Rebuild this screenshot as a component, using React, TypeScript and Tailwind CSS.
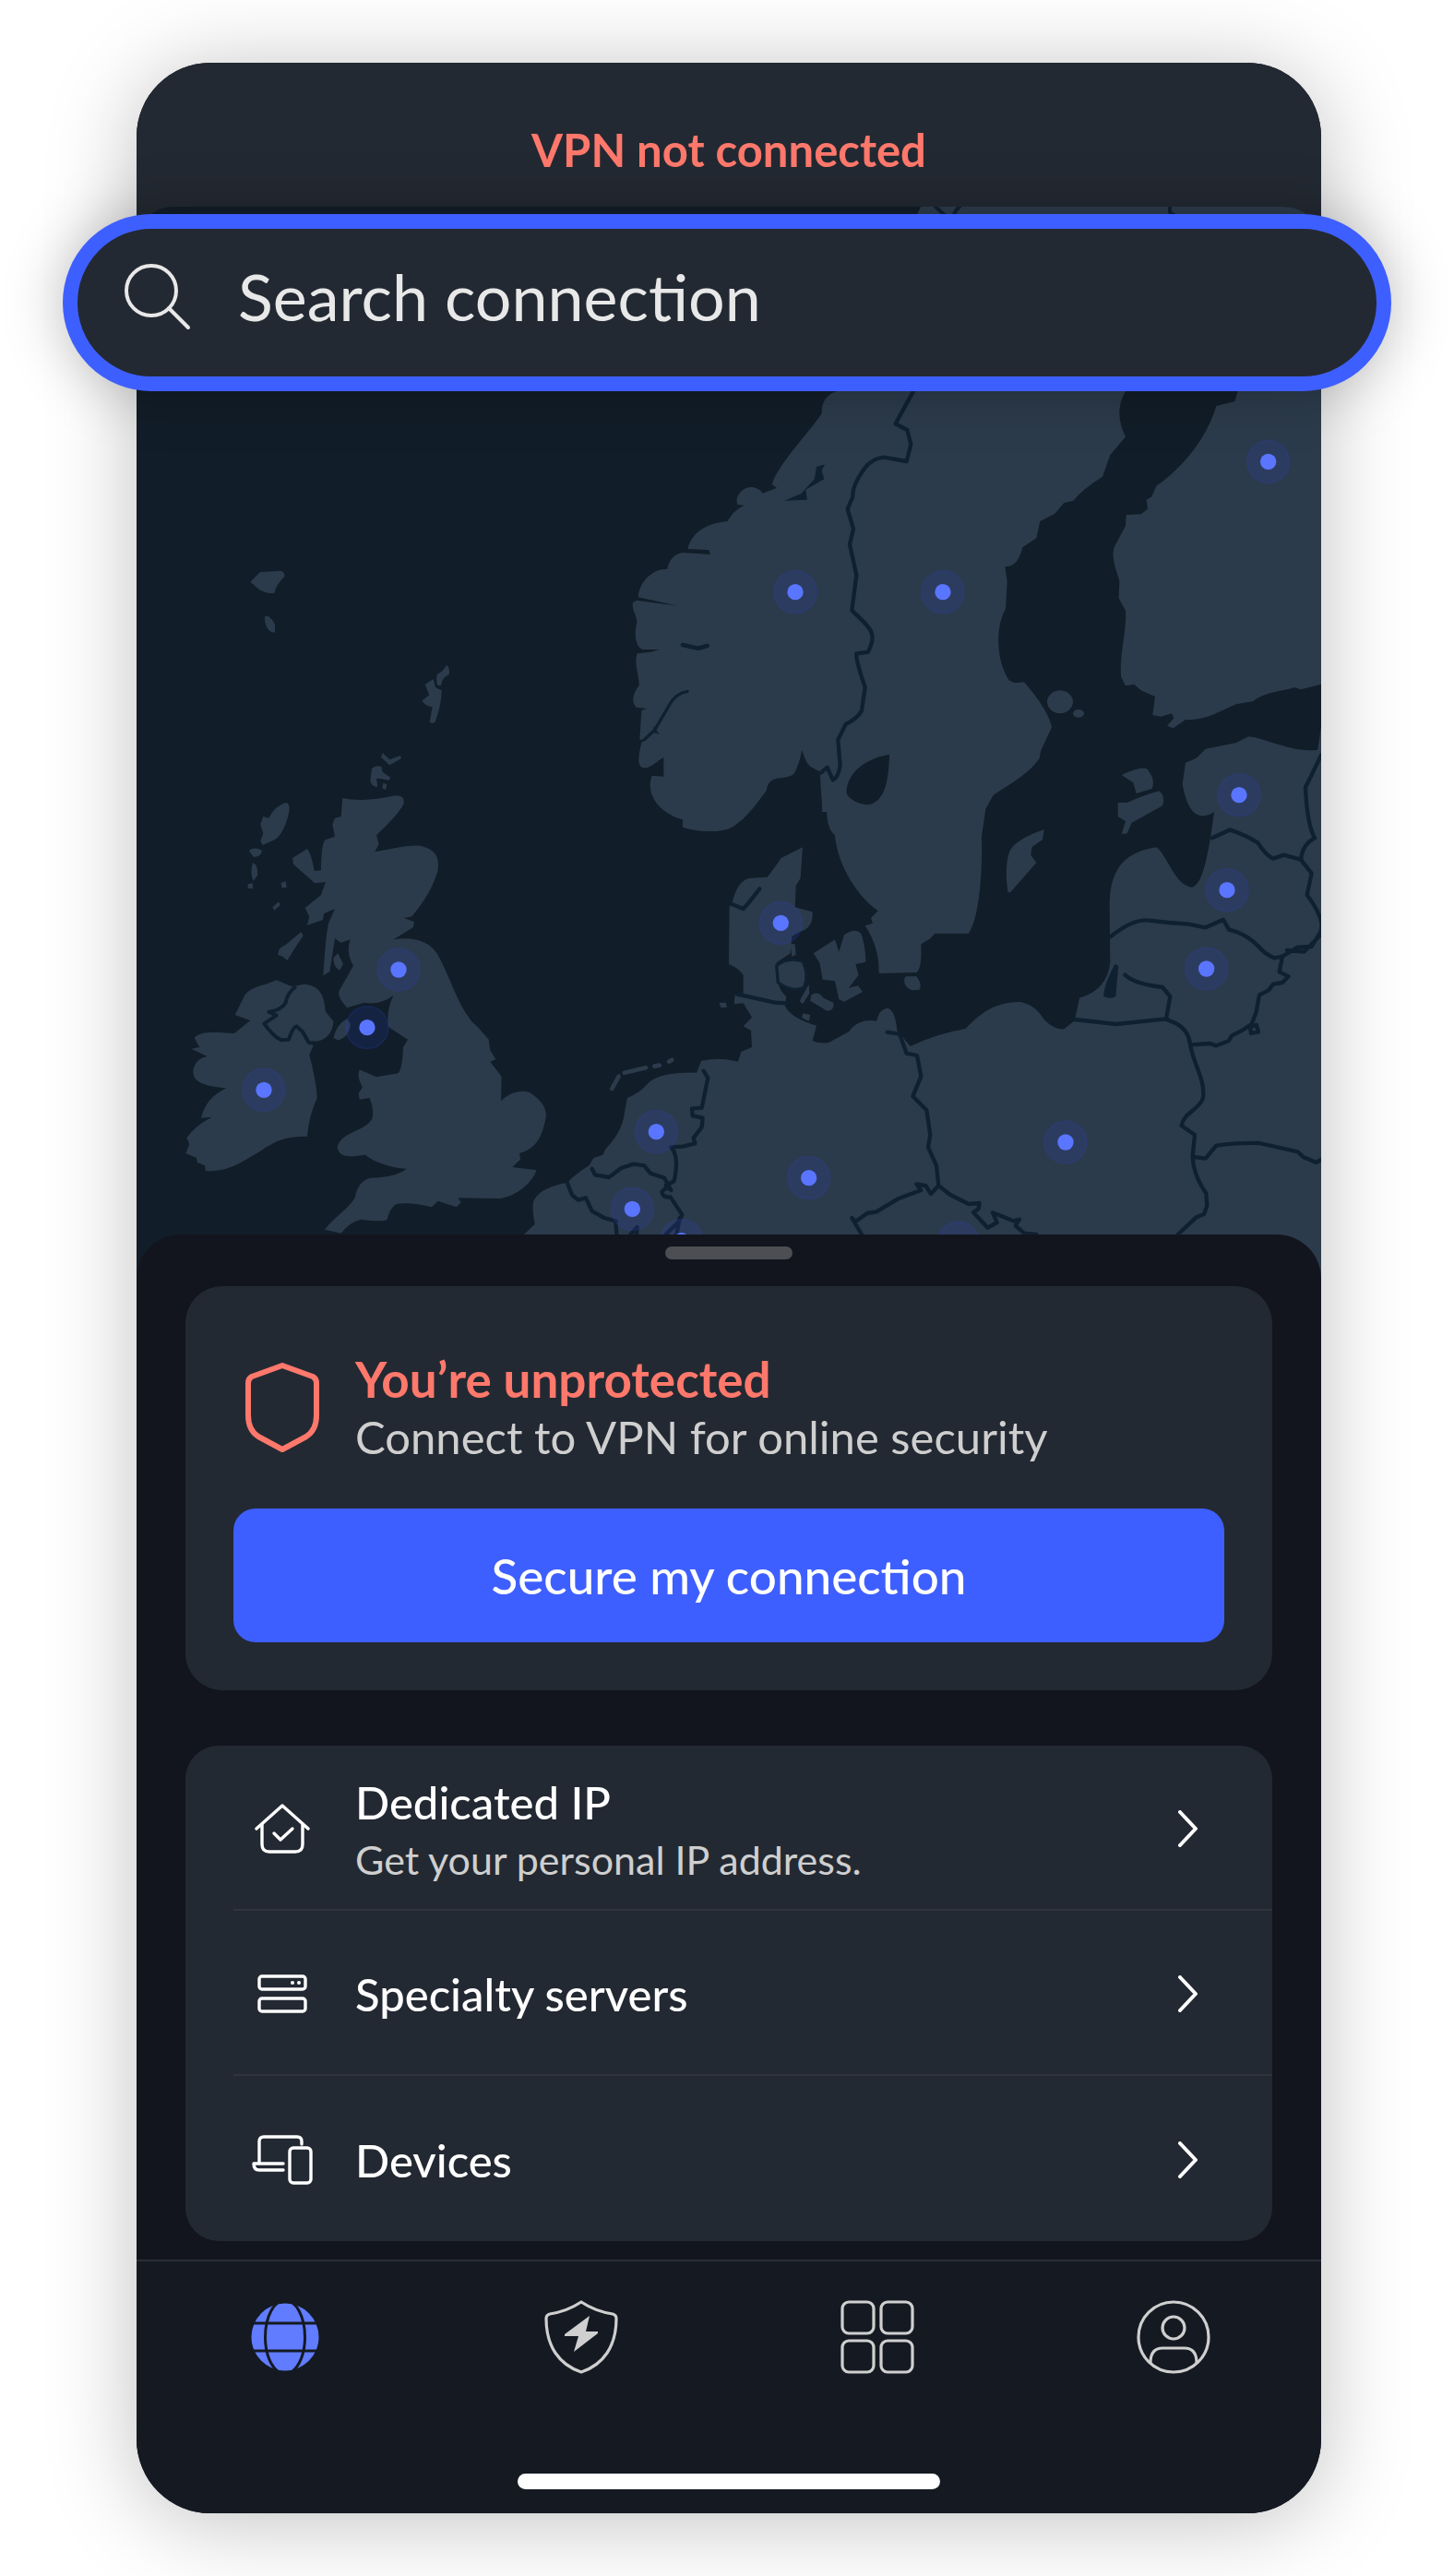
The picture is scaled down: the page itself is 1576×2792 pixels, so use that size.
import React, { useState } from "react";

const font = "font-['Lato','Noto_Sans',sans-serif]";

// server pins, in map units (3 per pixel)
const servers = [
  { name: "Norway", x: 2142, y: 1253 },
  { name: "Sweden", x: 2622, y: 1253 },
  { name: "Finland", x: 3680, y: 829 },
  { name: "Estonia", x: 3585, y: 1913 },
  { name: "Latvia", x: 3546, y: 2222 },
  { name: "Lithuania", x: 3479, y: 2478 },
  { name: "Poland", x: 3021, y: 3042 },
  { name: "United Kingdom", x: 852, y: 2481 },
  { name: "Isle of Man", x: 750, y: 2669 },
  { name: "Ireland", x: 414, y: 2872 },
  { name: "Denmark", x: 2095, y: 2329 },
  { name: "Netherlands", x: 1690, y: 3008 },
  { name: "Germany", x: 2186, y: 3158 },
  { name: "Belgium", x: 1612, y: 3259 },
  { name: "Luxembourg", x: 1772, y: 3362 },
  { name: "Czechia", x: 2672, y: 3370 },
];

function ServerMap() {
  return (
    <svg
      viewBox="0 0 3852 3510"
      preserveAspectRatio="xMidYMin slice"
      role="img"
      aria-label="Server map"
      className="block h-[1170px] w-full rounded-t-[40px] bg-[#111d28]"
    >
      <g fill="#2c3b4b" strokeLinejoin="round" strokeLinecap="round">
        {/* Faroe, Shetland, Orkney */}
        <g transform="translate(0 528)">
          <path d="M370 692 L402 660 L470 656 Q485 662 480 676 Q455 700 448 728 Q425 732 400 718 Z" />
          <path d="M418 802 Q440 805 450 832 L450 856 Q435 858 425 842 Q414 822 418 802 Z" />
          <path d="M1008 962 Q1020 970 1016 994 Q995 1000 990 1028 L980 1030 Q970 1005 980 990 Q996 985 1008 962 Z" />
          <path d="M965 1008 L972 1035 L992 1045 Q992 1090 972 1145 Q965 1156 953 1148 L962 1098 Q940 1098 928 1078 L952 1060 L938 1025 Z" />
          <path d="M800 1248 L823 1270 L858 1257 L861 1266 L823 1288 L795 1262 Z" />
          <path d="M765 1298 Q780 1288 796 1292 L800 1310 L826 1328 L820 1338 Q790 1330 780 1332 L784 1358 Q765 1358 760 1340 Z" />
          <path d="M803 1345 L814 1352 L810 1368 L798 1362 Z" />
        </g>

        {/* British Isles */}
        <g transform="translate(0 1968)">
          <path d="M670 -45 Q740 -30 840 -53 Q875 -55 868 -25 Q850 10 780 75 L788 105 L775 130 C830 120 880 108 920 110 C975 120 985 150 980 190 C960 260 920 310 895 340 L870 345 L903 358 L900 375 L835 415 C900 405 960 420 985 475 C1030 560 1050 650 1110 700 L1145 740 L1150 775 L1168 805 L1150 812 L1187 860 L1185 940 C1220 905 1270 900 1290 920 C1340 960 1335 985 1325 1020 C1310 1080 1280 1100 1245 1110 L1248 1130 L1222 1155 L1300 1165 C1290 1200 1240 1250 1180 1257 L1045 1255 L1055 1270 L1040 1285 L980 1265 L960 1285 C900 1270 870 1272 845 1275 Q825 1285 815 1325 Q800 1335 730 1325 Q690 1335 665 1370 L612 1358 C640 1320 690 1290 710 1255 Q720 1200 760 1190 Q840 1190 878 1160 L850 1158 Q770 1140 745 1115 C700 1120 660 1130 653 1090 C665 1040 740 1040 765 1000 Q775 970 757 930 L725 935 L722 915 L735 895 Q715 860 725 838 L780 862 L850 850 Q865 835 867 765 L882 740 L820 700 Q810 650 835 597 Q790 630 740 620 L685 637 Q650 600 660 580 L705 500 Q680 460 695 415 L665 425 L645 412 L628 520 L607 532 Q615 400 625 360 L645 315 L610 330 L605 352 L555 368 L562 340 L548 312 L600 270 L615 228 L580 232 L510 170 L507 150 L555 120 Q570 140 578 192 L600 190 Q600 100 615 90 L645 80 L637 40 L645 20 L665 15 Z" />
          <path d="M350 600 Q360 575 420 560 L455 547 L505 568 L545 560 C600 565 610 600 615 650 L640 680 C640 720 610 750 570 745 L575 760 L562 790 Q585 880 587 930 Q560 990 555 1055 C480 1055 450 1070 400 1105 C340 1140 300 1170 225 1168 L222 1150 L198 1140 L195 1125 L160 1110 L172 1080 L163 1060 Q190 1020 245 992 L210 995 Q225 930 292 898 C200 890 180 870 185 835 Q195 800 230 795 L178 770 L205 765 L188 735 C210 710 260 718 318 720 L370 678 L320 660 Z" />
          <path d="M485 -30 Q500 -28 496 0 Q480 70 450 90 L410 108 L403 95 L412 70 L403 40 L412 15 L430 20 Q450 -20 485 -30 Z" />
          <path d="M365 125 Q385 112 408 125 Q405 148 380 146 Z M378 165 Q395 170 394 205 L380 225 Q368 200 378 165 Z M362 235 L378 232 L378 250 L362 248 Z M470 230 L485 226 L488 246 L472 246 Z M442 310 L462 292 L468 302 L448 320 Z" />
          <path d="M535 390 L542 402 Q510 450 490 483 L475 470 L460 465 Q460 440 485 432 Z M640 475 L655 460 L672 495 L660 515 Q640 505 640 475 Z" />
          <path d="M640 735 Q650 690 685 672 L695 690 Q690 735 655 742 Z" />
          <path
            d="M515 570 Q490 590 485 620 Q470 645 430 650 L455 662 L415 688 Q440 725 470 742 L495 740 Q508 700 520 697 L540 715 L560 750 L572 752"
            fill="none"
            stroke="#0f2131"
            strokeWidth="12"
          />
        </g>

        {/* Norway and Sweden */}
        <g transform="translate(1476 528)">
          <path d="M1074 -528 L800 72 Q750 90 752 145 C700 220 610 310 590 375 L606 386 L560 404 C540 375 490 375 475 425 L478 440 L500 444 C465 460 460 475 445 495 C380 500 330 530 316 585 L385 588 L390 603 L300 597 C270 600 255 625 250 650 C200 650 160 690 155 742 L285 770 L150 752 L137 760 C137 800 155 800 150 830 C140 870 150 905 170 912 L225 912 L195 920 L152 925 C140 960 160 1000 158 1030 C140 1050 130 1085 150 1100 L182 1104 L166 1110 L160 1205 L175 1205 L166 1215 C155 1260 150 1295 175 1297 C200 1295 215 1275 238 1262 L238 1325 L200 1322 C180 1370 210 1440 300 1465 L300 1490 C350 1505 420 1510 460 1490 C510 1460 550 1400 572 1370 C578 1340 590 1332 620 1330 C650 1325 660 1320 665 1310 C675 1290 685 1260 687 1238 C695 1260 705 1290 720 1295 L748 1310 C745 1350 755 1400 753 1440 L768 1440 C770 1480 780 1505 795 1515 C800 1590 850 1700 935 1762 L912 1785 L918 1802 L893 1810 Q940 1880 938 1965 L1060 1962 Q1078 1950 1075 1870 L1105 1852 L1120 1835 L1230 1835 C1265 1780 1275 1640 1272 1520 L1285 1430 L1310 1385 C1380 1340 1430 1310 1460 1265 L1465 1240 L1500 1165 Q1490 1110 1410 1018 Q1375 1025 1360 1010 C1320 950 1315 840 1350 780 L1355 690 L1348 642 Q1390 645 1405 580 L1450 550 L1462 495 L1510 470 L1540 435 L1570 428 Q1600 390 1665 350 L1690 280 L1740 220 Q1700 140 1740 72 L1800 0 L2376 -300 L2376 -528 Z" />
          <path
            d="M972 1253 C970 1330 960 1415 895 1417 C860 1412 832 1390 832 1375 C835 1320 880 1270 972 1253 Z"
            fill="#111d28"
          />
          <path
            d="M630 428 L685 405 L728 358 L735 318 L762 310 L752 330 L760 358 L700 392 L705 425 Z M205 1160 L215 1175 L225 1188 L205 1182 Z"
            fill="#0f2131"
          />
          <g fill="none" stroke="#0f2131">
            <path d="M300 897 L350 908 L380 900" strokeWidth="14" />
            <path d="M315 1048 Q275 1055 255 1095 L210 1172 L175 1205" strokeWidth="10" />
            <path
              d="M1050 72 L992 178 L1030 198 L1042 245 L1028 300 L955 287 Q915 290 890 325 Q850 380 853 415 L836 455 L855 520 L843 570 L865 670 L850 785 C920 850 930 860 903 920 L865 925 Q862 945 893 1035 L882 1110 Q870 1135 830 1155 L805 1205 L812 1290 Q805 1330 788 1336 L770 1295 L750 1312"
              strokeWidth="13"
            />
            <path d="M1122 -528 L1152 -500 M1200 -528 Q1180 -510 1180 -490 M1884 -528 V-510 L1905 -495" strokeWidth="12" />
          </g>
        </g>

        {/* Finland and the Estonian islands */}
        <g transform="translate(2676 528)">
          <path d="M920 0 L905 72 L895 105 L835 120 C810 210 740 310 640 380 L625 415 L608 425 L612 455 L590 472 L542 474 L540 510 L505 575 C490 610 510 650 520 690 L518 745 L540 785 C545 850 520 920 525 1000 L540 1030 L568 1025 L590 1045 L636 1065 L628 1125 L655 1130 L690 1120 L697 1135 L675 1160 L695 1168 L735 1140 C800 1145 850 1110 900 1090 L955 1080 C990 1050 1040 1050 1090 1035 L1110 1042 L1176 1025 V0 Z" />
          <ellipse cx="327" cy="1082" rx="42" ry="37" />
          <ellipse cx="387" cy="1120" rx="18" ry="13" />
          <path d="M527 1320 Q590 1290 610 1300 Q640 1340 625 1365 L575 1380 L565 1345 Z" />
          <path d="M515 1410 L545 1410 Q600 1385 650 1372 Q670 1390 660 1420 L560 1475 L545 1510 L527 1512 L540 1470 L515 1455 Z" />
        </g>

        {/* Mainland, from Denmark to the Baltics */}
        <g transform="translate(1476 1968)">
          <path d="M-216 1374 L-181 1340 Q-190 1300 -186 1270 Q-175 1225 -76 1205 Q-40 1170 -4 1150 L10 1125 L40 1115 L50 1095 Q105 1040 112 970 L120 930 Q160 915 190 880 Q230 845 345 848 L360 810 Q420 795 480 812 L490 780 L525 765 L522 710 L497 697 L525 668 L497 622 L467 625 L470 595 L497 590 L497 530 Q485 510 450 495 L452 310 L462 290 Q480 220 520 215 L575 212 Q600 180 620 150 L690 115 L683 215 L668 240 L665 310 L722 325 C725 370 700 385 680 390 L655 405 L650 460 L605 490 Q600 570 637 600 L632 630 Q650 670 735 695 L722 745 Q750 755 775 750 L840 715 Q870 670 930 680 Q940 640 965 638 Q990 640 997 710 L1040 762 Q1130 720 1220 705 C1280 640 1330 618 1400 618 Q1450 630 1475 675 Q1510 710 1540 706 L1575 678 L1590 605 Q1680 580 1690 490 L1688 300 C1690 170 1750 130 1840 115 C1870 130 1900 240 1955 245 C1990 240 2010 140 2028 0 Q1950 50 1925 -90 L1935 -160 L1970 -175 L2000 -205 L2100 -225 L2140 -245 C2200 -240 2280 -190 2365 -202 L2376 -280 V1560 H-216 Z" />
          <path d="M650 430 L665 430 L668 465 L655 470 Z M418 620 L440 620 L444 635 L425 637 Z M690 655 L715 660 L710 680 L688 670 Z" />
          <path d="M605 500 Q640 470 690 485 Q712 530 695 570 Q660 590 610 555 Z" stroke="#0f2131" strokeWidth="10" />
          <path d="M725 460 L795 415 L808 455 L825 400 Q860 375 880 395 Q895 440 895 488 L862 495 L872 530 L840 572 L870 565 L885 585 L825 617 L808 610 L795 550 L755 545 L745 490 Z" />
          <path d="M718 595 Q740 580 758 605 L790 620 Q795 645 770 647 L715 615 Z M710 560 L712 590 L690 625 L680 615 Z" />
          <path d="M1025 535 L1060 535 Q1080 560 1070 578 L1045 580 Q1020 570 1020 545 Z" />
          <path
            d="M70 900 L92 860 M110 848 L180 832 M208 827 L225 824 M255 812 L265 806"
            fill="none"
            stroke="#2c3b4b"
            strokeWidth="14"
          />
          <path d="M1475 60 L1470 90 L1435 115 L1432 140 L1450 165 L1365 262 L1357 260 Q1345 180 1362 130 Q1380 90 1475 57 Z" />
          <path d="M1705 495 L1717 500 L1708 600 Q1690 610 1668 600 Q1670 560 1705 495 Z" fill="#0f2131" />
          <g fill="none" stroke="#0f2131" strokeWidth="13">
            <path d="M460 300 L497 315 L515 295 L550 250" />
            <path d="M478 593 L600 620 L637 622" />
            {/* Netherlands and Belgium */}
            <path d="M368 842 L382 865 L362 962 L330 965 L332 988 L365 995 L362 1025 L335 1060 L340 1078 L300 1088 L262 1090 Q290 1120 272 1200 L245 1215" />
            <path d="M5 1160 L15 1180 L60 1188 L100 1158 L140 1145 L175 1150 L195 1175 L240 1190 L262 1230 M262 1230 Q250 1215 232 1235 Q235 1255 260 1252 L298 1310 L285 1335 L245 1374 M290 1320 L280 1374" />
            <path d="M-76 1205 L-60 1245 L-40 1262 L-15 1255 L5 1298 L45 1320 L82 1330 L85 1374 M130 1374 L152 1350 L150 1374" />
            {/* Germany, Poland and Czechia */}
            <path d="M965 716 L1005 722 L1028 785 L1062 792 L1075 860 L1048 925 L1093 970 L1105 1050 L1098 1090 L1125 1150 L1132 1215 L1107 1242 L1090 1215 L1060 1210 L1075 1230 L1000 1258 L930 1300 L900 1305 L862 1332 L850 1320 L882 1374" />
            <path d="M1132 1215 L1170 1245 L1230 1275 L1265 1272 L1262 1290 L1245 1302 L1292 1352 L1322 1335 L1308 1303 L1375 1330 L1395 1325 L1382 1345 L1410 1370 L1450 1374" />
            {/* Poland, Belarus and Ukraine */}
            <path d="M1575 675 L1710 690 L1870 673 L1905 688 Q1945 710 1950 755 C1960 820 2000 870 1992 930 C1980 970 1930 975 1922 1020 L1965 1050 L1958 1120 Q1960 1180 2002 1240 L2005 1280 L1995 1308 L1970 1318 L1910 1374" />
            <path d="M1965 1122 L2000 1127 L2035 1085 Q2100 1075 2175 1077 L2300 1105 L2318 1122 L2360 1140 L2376 1130" />
            {/* Lithuania, Latvia and Estonia */}
            <path d="M1692 405 Q1760 350 1810 352 L1880 360 L1945 365 L2000 376 L2058 350 L2076 383 Q2130 395 2170 435 Q2195 465 2225 475 L2250 470 L2240 520 L2270 535 L2250 555 L2220 560 L2205 580 L2175 595 L2165 650 L2150 690 L2120 710 L2085 728 L2075 745 L2035 760 L2015 753 L1955 757" />
            <path d="M2145 700 L2165 692 L2172 715 L2148 720 Z" />
            <path d="M1738 530 Q1770 560 1860 570 L1885 600 L1872 673" />
            <path d="M2022 85 L2080 58 Q2130 75 2170 100 Q2195 140 2220 152 L2255 140 L2310 155 L2345 200 L2330 270 Q2390 350 2374 390 L2345 438 L2300 440 L2250 470 M2374 400 L2320 455 L2265 450" />
            <path d="M2310 155 Q2315 105 2355 85 Q2330 40 2325 -80 L2345 -120 L2376 -185" />
          </g>
        </g>
      </g>
      {servers.map((server) => (
        <g key={server.name}>
          <circle cx={server.x} cy={server.y} r="69" fill="#2f43c4" fillOpacity="0.18" stroke="#2f43c4" strokeOpacity="0.2" strokeWidth="5" />
          <circle cx={server.x} cy={server.y} r="26" fill="#5a75ff" />
        </g>
      ))}
    </svg>
  );
}

function Chevron() {
  return (
    <svg width="22" height="40" viewBox="0 0 22 40" fill="none" stroke="#fff" strokeWidth="4" strokeLinecap="round" strokeLinejoin="round">
      <path d="M2 2 L19 20 L2 38" />
    </svg>
  );
}

const HouseIcon = () => (
  <svg width="60" height="54" viewBox="0 0 60 54" fill="none" stroke="#fff" strokeWidth="3.4" strokeLinecap="round" strokeLinejoin="round">
    <path d="M2 27 L30 2 L58 27" />
    <path d="M8 22 V44 Q8 52 16 52 H44 Q52 52 52 44 V22" />
    <path d="M21 32 L28 39 L41 27" />
  </svg>
);

const ServersIcon = () => (
  <svg width="54" height="42" viewBox="0 0 54 42" fill="none" stroke="#fff" strokeWidth="3.4">
    <rect x="2" y="2" width="50" height="14" rx="3" />
    <rect x="2" y="26" width="50" height="14" rx="3" />
    <circle cx="38" cy="9" r="2" fill="#fff" stroke="none" />
    <circle cx="45" cy="9" r="2" fill="#fff" stroke="none" />
  </svg>
);

const DevicesIcon = () => (
  <svg width="66" height="54" viewBox="0 0 66 54" fill="none" stroke="#fff" strokeWidth="3.4" strokeLinecap="round" strokeLinejoin="round">
    <path d="M8 30 V7 Q8 2 13 2 H49 Q54 2 54 7 V10" />
    <path d="M34 31 H2 Q2 38 8 38 H34" />
    <rect x="41" y="14" width="23" height="38" rx="4" />
  </svg>
);

const menuItems = [
  { title: "Dedicated IP", detail: "Get your personal IP address.", icon: <HouseIcon /> },
  { title: "Specialty servers", detail: "", icon: <ServersIcon /> },
  { title: "Devices", detail: "", icon: <DevicesIcon /> },
];

const tabs = [
  {
    label: "VPN",
    icon: (
      <svg width="80" height="80" viewBox="0 0 80 80">
        <circle cx="40" cy="40" r="36.5" fill="#617cff" />
        <g fill="none" stroke="#151a22" strokeWidth="3">
          <ellipse cx="40" cy="40" rx="21.5" ry="40" />
          <path d="M0 25 H80 M0 55 H80" />
        </g>
      </svg>
    ),
  },
  {
    label: "Threat protection",
    icon: (
      <svg width="80" height="80" viewBox="0 0 80 80">
        <path
          d="M40 2 Q55 12 74 15 Q78 16 78 20 C78 50 64 70 40 78 C16 70 2 50 2 20 Q2 16 6 15 Q25 12 40 2 Z"
          fill="none"
          stroke="#cfcfcf"
          strokeWidth="3.2"
          strokeLinejoin="round"
        />
        <path d="M49 17 L22 37 V39 H37 L32 56 L58 36 V34 H45 Z" fill="#cfcfcf" />
      </svg>
    ),
  },
  {
    label: "Products",
    icon: (
      <svg width="80" height="80" viewBox="0 0 80 80" fill="none" stroke="#cfcfcf" strokeWidth="3.2">
        <rect x="2" y="2" width="34" height="34" rx="7" />
        <rect x="44" y="2" width="34" height="34" rx="7" />
        <rect x="2" y="44" width="34" height="34" rx="7" />
        <rect x="44" y="44" width="34" height="34" rx="7" />
      </svg>
    ),
  },
  {
    label: "Profile",
    icon: (
      <svg width="80" height="80" viewBox="0 0 80 80" fill="none" stroke="#cfcfcf" strokeWidth="3.2">
        <circle cx="40" cy="40" r="38" />
        <circle cx="40" cy="30" r="12" />
        <path d="M15 68 V66 Q16 52 28 52 H52 Q64 52 65 66 V68" />
      </svg>
    ),
  },
];

export default function App() {
  const [search, setSearch] = useState("");
  const [activeTab, setActiveTab] = useState("VPN");

  return (
    <main className={`min-h-screen bg-white px-[68px] py-[68px] ${font}`}>
      <div className="relative mr-[76px] ml-20 rounded-[80px] bg-[#12151e] shadow-[0_8px_96px_rgba(0,0,0,0.25)]">
        <header className="rounded-t-[80px] bg-[#232932] pt-16 pb-8">
          <h1 className="text-center text-[49px] leading-[60px] font-bold text-[#ff786c]">
            VPN not connected
          </h1>
        </header>

        {/* search bar is wider than the phone and lies over the map */}
        <label className="absolute top-[164px] right-[-76px] left-[-80px] z-10 flex h-48 items-center gap-[51px] rounded-full border-16 border-[#3e5fff] bg-[#232932] pr-16 pl-[51px] shadow-[0_0_64px_rgba(0,0,0,0.25)]">
          <svg width="72" height="72" viewBox="0 0 72 72" fill="none" stroke="#e8e8e8" strokeWidth="4" strokeLinecap="round" className="mb-3 shrink-0">
            <circle cx="29" cy="29" r="27" />
            <path d="M48 48 L69 69" />
          </svg>
          <input
            type="search"
            aria-label="Search connection"
            placeholder="Search connection"
            value={search}
            onChange={(event) => setSearch(event.target.value)}
            className="w-full min-w-0 bg-transparent pb-[14px] text-[70px] leading-[84px] text-[#e8e8e8] outline-none placeholder:text-[#e8e8e8]"
          />
        </label>

        <div className="bg-[#232932]">
          <ServerMap />
        </div>

        <section className="relative -mt-14 rounded-t-[48px] bg-[#12151e] px-[53px] pt-[13px] pb-5">
          <div className="mx-auto h-[14px] w-[138px] rounded-full bg-[#4d4e53]"></div>

          <div className="mt-[29px] rounded-[40px] bg-[#232932] px-[52px] pt-[70px] pb-[52px]">
            <div className="flex items-center gap-[39px] pl-[13px]">
              <svg width="80" height="98" viewBox="0 0 80 98" fill="none" stroke="#ff786c" strokeWidth="6" strokeLinejoin="round">
                <path d="M40 3 L73 15 Q77 17 77 22 V57 Q77 73 66 80 L40 94 L14 80 Q3 73 3 57 V22 Q3 17 7 15 Z" />
              </svg>
              <div>
                <h2 className="text-[53px] leading-[62px] font-bold text-[#ff786c]">
                  You’re unprotected
                </h2>
                <p className="text-[49px] leading-[62px] text-[#cfcfcf]">
                  Connect to VPN for online security
                </p>
              </div>
            </div>
            <button
              type="button"
              className="mt-[47px] h-[145px] w-full rounded-3xl bg-[#3e5fff] text-[53px] leading-[62px] font-medium text-white"
            >
              Secure my connection
            </button>
          </div>

          <ul className="mt-[60px] rounded-[36px] bg-[#232932] pl-[52px]">
            {menuItems.map((item) => (
              <li key={item.title} className="h-[179px] border-b-2 border-[#30343d] pt-0.5 last:border-b-0">
                <button type="button" className="flex h-full w-full items-center gap-[39px] pr-20 pl-[13px] text-left">
                  <span className="flex w-20 shrink-0 justify-center">{item.icon}</span>
                  <span className={item.detail ? "flex flex-1 flex-col gap-1 pt-1" : "flex flex-1 flex-col"}>
                    <span className="text-[49px] leading-[60px] font-medium text-white">{item.title}</span>
                    {item.detail && (
                      <span className="text-[43px] leading-[58px] text-[#cfcfcf]">{item.detail}</span>
                    )}
                  </span>
                  <Chevron />
                </button>
              </li>
            ))}
          </ul>
        </section>

        <footer className="rounded-b-[80px] border-t-2 border-[#2a2e37] bg-[#151a22] pt-[42px] pb-[26px]">
          <nav className="grid grid-cols-4">
            {tabs.map((tab) => (
              <button
                key={tab.label}
                type="button"
                aria-label={tab.label}
                aria-pressed={activeTab === tab.label}
                onClick={() => setActiveTab(tab.label)}
                className="flex justify-center"
              >
                {tab.icon}
              </button>
            ))}
          </nav>
          <div className="mx-auto mt-[108px] h-[17px] w-[458px] rounded-full bg-white"></div>
        </footer>
      </div>
    </main>
  );
}
